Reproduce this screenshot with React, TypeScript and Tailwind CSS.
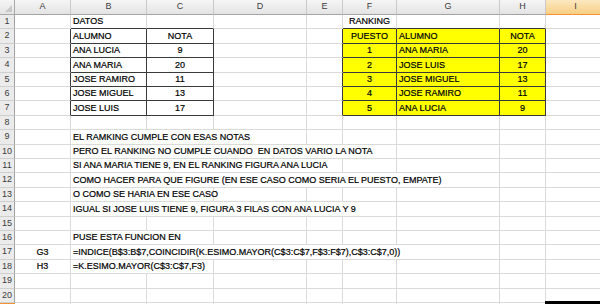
import React from "react";

type Cell = {
  t?: string;
  span?: number;
  c?: boolean;
  r?: boolean;
  b?: boolean;
  y?: boolean;
};

const SPAN: Record<number, string> = {
  1: "",
  2: "col-span-2",
  3: "col-span-3",
  4: "col-span-4",
  5: "col-span-5",
  6: "col-span-6",
};

const E = (): Cell => ({});
const plain = (n: number): Cell[] => Array.from({ length: n }, () => ({}));

const dataRows: [string, string, string, string, string][] = [
  ["ALUMNO", "NOTA", "PUESTO", "ALUMNO", "NOTA"],
  ["ANA LUCIA", "9", "1", "ANA MARIA", "20"],
  ["ANA MARIA", "20", "2", "JOSE LUIS", "17"],
  ["JOSE RAMIRO", "11", "3", "JOSE MIGUEL", "13"],
  ["JOSE MIGUEL", "13", "4", "JOSE RAMIRO", "11"],
  ["JOSE LUIS", "17", "5", "ANA LUCIA", "9"],
];

const rows: Cell[][] = [
  [E(), { t: "DATOS", b: true }, { b: true }, E(), E(), { t: "RANKING", c: true, b: true }, { b: true }, { b: true }, E()],
  ...dataRows.map((d) => [
    { r: true },
    { t: d[0], r: true, b: true },
    { t: d[1], c: true, r: true, b: true },
    E(),
    { r: true },
    { t: d[2], c: true, r: true, b: true, y: true },
    { t: d[3], r: true, b: true, y: true },
    { t: d[4], c: true, r: true, b: true, y: true },
    E(),
  ]),
  plain(9),
  [E(), { t: "EL RAMKING CUMPLE CON ESAS NOTAS", span: 3 }, ...plain(5)],
  [E(), { t: "PERO EL RANKING NO CUMPLE CUANDO  EN DATOS VARIO LA NOTA", span: 5 }, ...plain(3)],
  [E(), { t: "SI ANA MARIA TIENE 9, EN EL RANKING FIGURA ANA LUCIA", span: 4 }, ...plain(4)],
  [E(), { t: "COMO HACER PARA QUE FIGURE (EN ESE CASO COMO SERIA EL PUESTO, EMPATE)", span: 6 }, ...plain(2)],
  [E(), { t: "O COMO SE HARIA EN ESE CASO", span: 2 }, ...plain(6)],
  [E(), { t: "IGUAL SI JOSE LUIS TIENE 9, FIGURA 3 FILAS CON ANA LUCIA Y 9", span: 5 }, ...plain(3)],
  plain(9),
  [E(), { t: "PUSE ESTA FUNCION EN", span: 2 }, ...plain(6)],
  [{ t: "G3", c: true }, { t: "=INDICE(B$3:B$7,COINCIDIR(K.ESIMO.MAYOR(C$3:C$7,F$3:F$7),C$3:C$7,0))", span: 6 }, ...plain(2)],
  [{ t: "H3", c: true }, { t: "=K.ESIMO.MAYOR(C$3:C$7,F3)", span: 2 }, ...plain(6)],
  plain(9),
  plain(9),
];

const COLS = ["A", "B", "C", "D", "E", "F", "G", "H", "I"];

export default function App() {
  return (
    <div
      className="relative w-[600px] h-[304px] overflow-hidden bg-white text-[9px] text-black"
      style={{ fontFamily: '"Liberation Sans", Arial, sans-serif' }}
    >
      <div className="grid grid-cols-[15px_56px_76px_67px_93px_36px_54px_103px_46px_60px] grid-rows-[15px_14px_15px_14px_15px_14px_14px_15px_14px_15px_14px_14px_15px_14px_15px_14px_14px_15px_14px_15px_14px_1px]">
        {/* corner */}
        <div className="relative bg-gradient-to-b from-[#f4f4f4] to-[#e4e4e4] border-r border-b border-[#a9a9a9]">
          <div className="absolute right-[2px] bottom-[2px] w-0 h-0 border-l-[7px] border-l-transparent border-b-[7px] border-b-[#c8c8c8]" />
        </div>
        {COLS.map((c) =>
          c === "I" ? (
            <div
              key={c}
              className="flex items-center justify-center bg-gradient-to-b from-[#fce8c0] to-[#f7cf83] border-r border-[#c8a56a] border-b border-b-[#f29436] text-[#3c3c3c]"
            >
              {c}
            </div>
          ) : (
            <div
              key={c}
              className="flex items-center justify-center bg-gradient-to-b from-[#f5f5f5] to-[#e4e4e4] border-r border-[#c9c9c9] border-b border-b-[#a3a3a3] text-[#3c3c3c]"
            >
              {c}
            </div>
          )
        )}
        {rows.map((row, ri) => (
          <React.Fragment key={ri}>
            <div className="flex items-center justify-center bg-[#ebebeb] border-r border-r-[#a3a3a3] border-b border-b-[#cfcfcf] text-[#3c3c3c]">
              {ri + 1}
            </div>
            {row.map((cell, ci) => (
              <div
                key={ci}
                className={[
                  SPAN[cell.span ?? 1],
                  "flex items-end pb-[1px] whitespace-pre overflow-visible leading-[11px] [-webkit-text-stroke:0.2px_#000]",
                  cell.c ? "justify-center" : "pl-[2px]",
                  cell.y ? "bg-[#ffff00]" : "",
                  "border-r border-b",
                  cell.r ? "border-r-[#3a3a3a]" : "border-r-[#dadada]",
                  cell.b ? "border-b-[#3a3a3a]" : "border-b-[#dadada]",
                ].join(" ")}
              >
                {cell.t}
              </div>
            ))}
          </React.Fragment>
        ))}
        {/* row 21 */}
        <div className="bg-[#f29436]" />
        {plain(8).map((_, i) => (
          <div key={i} className="border-r border-[#dadada]" />
        ))}
        <div className="bg-black" />
      </div>
      <div className="absolute left-[545px] top-[301px] w-[55px] h-[3px] bg-black" />
    </div>
  );
}
